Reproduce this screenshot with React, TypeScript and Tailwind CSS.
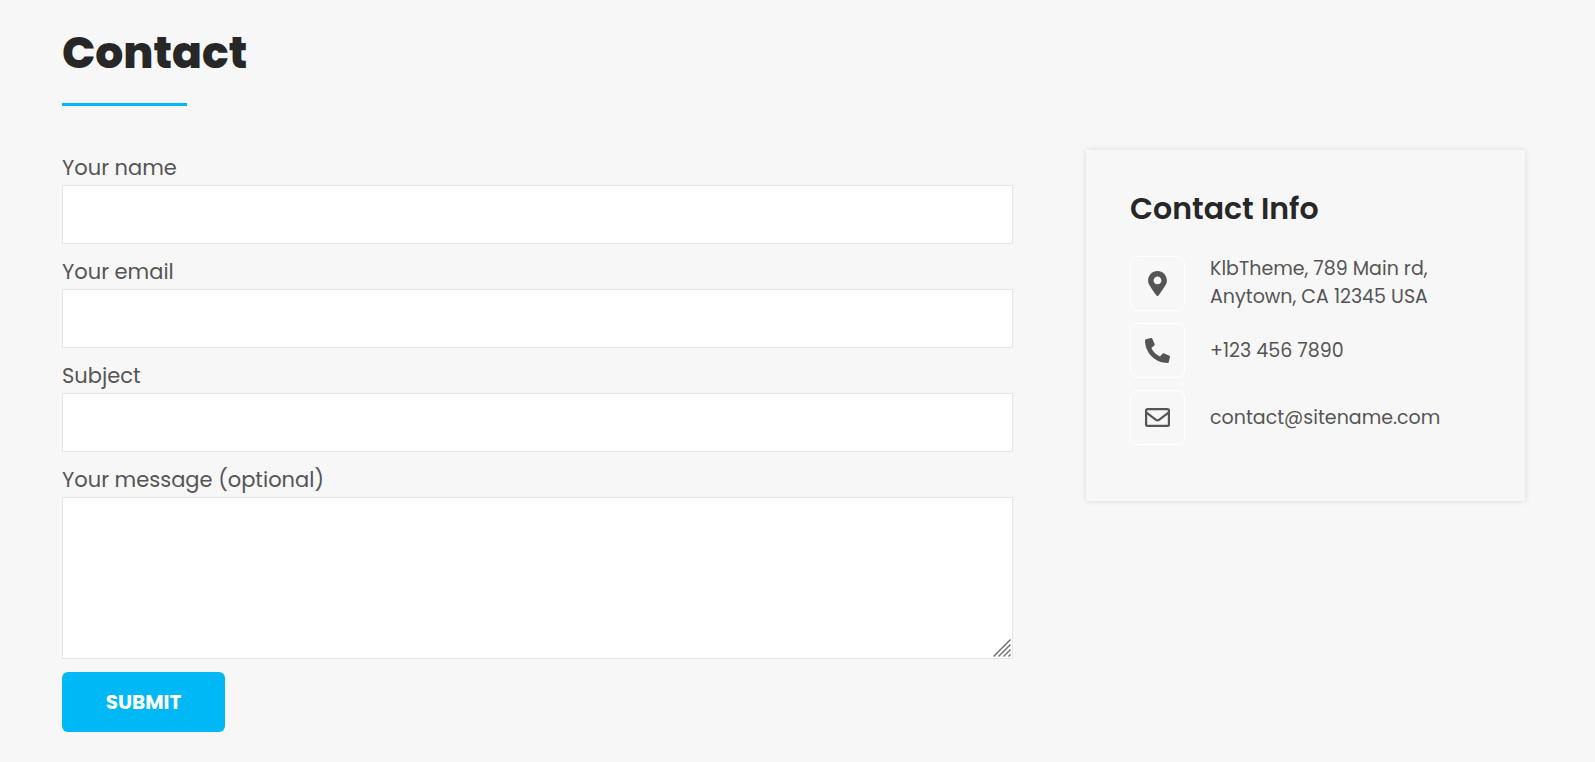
import type { ReactNode } from "react";
import { FaMapMarkerAlt, FaPhoneAlt } from "react-icons/fa";

const fields = [
  { id: "your-name", label: "Your name", type: "text" },
  { id: "your-email", label: "Your email", type: "email" },
  { id: "your-subject", label: "Subject", type: "text" },
];

interface InfoRowProps {
  icon: ReactNode;
  children: ReactNode;
}

function EnvelopeIcon() {
  return (
    <svg
      className="size-[25px]"
      viewBox="0 0 25 25"
      fill="none"
      stroke="currentColor"
      strokeWidth={2.2}
      strokeLinejoin="round"
      aria-hidden="true"
    >
      <rect x="1.1" y="4.1" width="22.8" height="16.8" rx="1.4" />
      <path d="M1.5 7.6L11 14.8Q12.5 15.9 14 14.8L23.5 7.6" />
    </svg>
  );
}

function InfoRow({ icon, children }: InfoRowProps) {
  return (
    <li className="flex items-center gap-[25px]">
      <span className="flex size-[55px] shrink-0 items-center justify-center rounded-lg border border-white text-[25px]">
        {icon}
      </span>
      <div className="text-[19px] leading-7">{children}</div>
    </li>
  );
}

function ContactForm() {
  return (
    <form className="flex flex-col pt-0.5" onSubmit={(e) => e.preventDefault()}>
      {fields.map((field) => (
        <div key={field.id} className="mb-3 flex flex-col">
          <label htmlFor={field.id} className="pb-0.5 text-[21px] leading-[31px]">
            {field.label}
          </label>
          <input
            id={field.id}
            name={field.id}
            type={field.type}
            className="h-[59px] w-full border border-[#e5e5e5] bg-white px-5 text-[19px] outline-none focus:border-[#00b8f5]"
          />
        </div>
      ))}

      <div className="mb-[13px] flex flex-col">
        <label htmlFor="your-message" className="pb-0.5 text-[21px] leading-[31px]">
          Your message (optional)
        </label>
        <div className="relative flex">
          <textarea
            id="your-message"
            name="your-message"
            className="h-[162px] w-full resize-none border border-[#e5e5e5] bg-white px-5 py-3 text-[19px] outline-none focus:border-[#00b8f5]"
          />
          {/* Resize grip */}
          <svg
            className="pointer-events-none absolute right-0.5 bottom-0.5 size-[18px]"
            viewBox="0 0 18 18"
            fill="none"
            stroke="#6b6b6b"
            strokeWidth={1.4}
            aria-hidden="true"
          >
            <path d="M0.5 17.5L17.5 0.5M5.5 17.5L17.5 5.5M10.5 17.5L17.5 10.5M15.5 17.5L17.5 15.5" />
          </svg>
        </div>
      </div>

      <button
        type="submit"
        className="h-[60px] w-[163px] cursor-pointer rounded-md bg-[#00b8f5] text-[20px] font-bold text-white"
      >
        SUBMIT
      </button>
    </form>
  );
}

function ContactInfo() {
  return (
    <aside className="px-11 pt-[41px] pb-14 shadow-[0_0_6px_rgba(0,0,0,0.12)]">
      <h2 className="mb-7 text-[30px] leading-9 font-semibold text-[#272727]">
        Contact Info
      </h2>
      <ul className="flex flex-col gap-3">
        <InfoRow icon={<FaMapMarkerAlt />}>
          KlbTheme, 789 Main rd,
          <br />
          Anytown, CA 12345 USA
        </InfoRow>
        <InfoRow icon={<FaPhoneAlt />}>
          <a href="tel:+1234567890">+123 456 7890</a>
        </InfoRow>
        <InfoRow icon={<EnvelopeIcon />}>
          <a href="mailto:contact@sitename.com">contact@sitename.com</a>
        </InfoRow>
      </ul>
    </aside>
  );
}

export default function App() {
  return (
    <main className="min-h-screen bg-[#f7f7f7] pt-6 pr-[70px] pb-7 pl-[62px] font-[Poppins,Inter,sans-serif] text-[#555]">
      <header className="mb-11">
        <h1 className="text-[44px] leading-[58px] font-extrabold text-[#272727]">
          Contact
        </h1>
        <div className="mt-[21px] h-[3px] w-[125px] bg-[#00b8f5]" />
      </header>
      <div className="grid grid-cols-1 items-start gap-[73px] lg:grid-cols-[13fr_6fr]">
        <ContactForm />
        <ContactInfo />
      </div>
    </main>
  );
}
